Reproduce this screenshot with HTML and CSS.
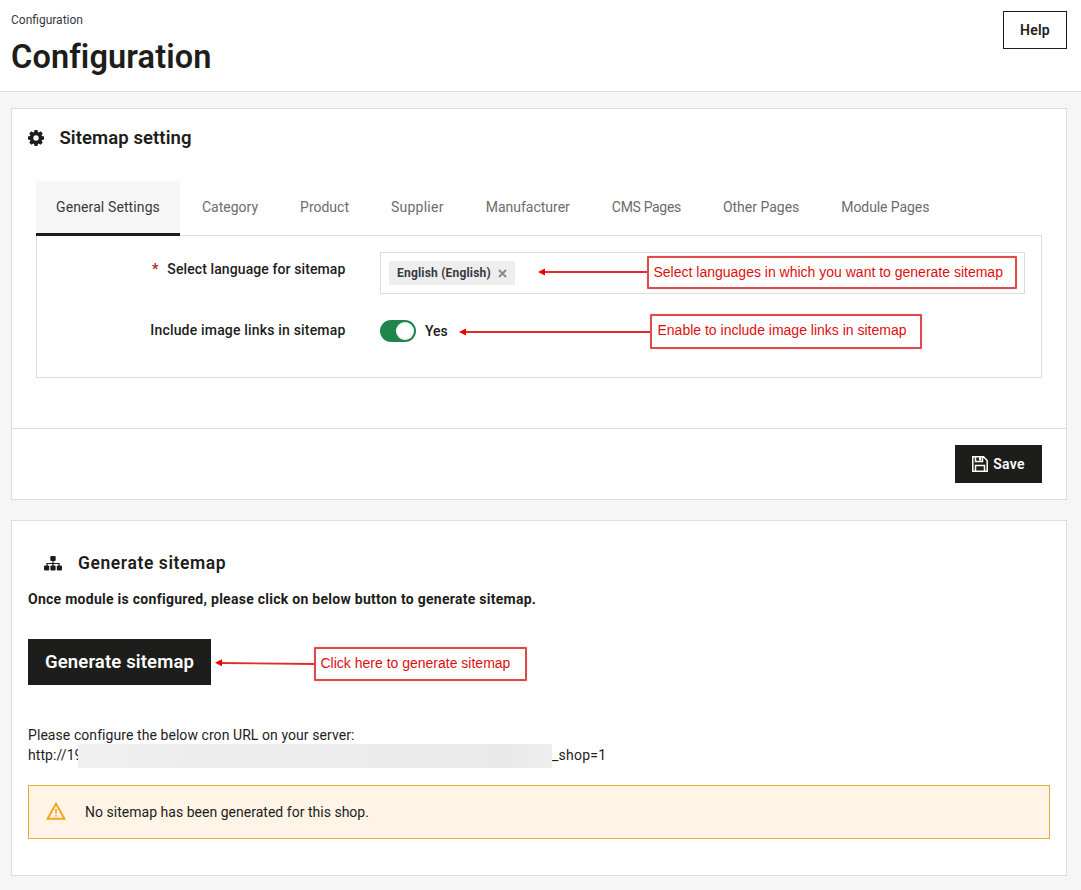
FILE: index.html
```
<!DOCTYPE html>
<html lang="en">
<head>
<meta charset="utf-8">
<title>Configuration</title>
<link rel="stylesheet" href="styles.css">
</head>
<body>
<header class="header">
  <div class="header-titles">
    <div class="breadcrumb">Configuration</div>
    <h1 class="page-title">Configuration</h1>
  </div>
  <button class="btn-help">Help</button>
</header>
<main class="main">
  <section class="card settings">
    <h2 class="card-title">
      <svg class="icon-gear" viewBox="0 0 16 16"><path fill-rule="evenodd" d="M6.500 0h3l.4 2.100.8.300L12.500 1.200l2.300 2.300-1.200 1.800.3.800 2.100.4v3l-2.100.4-.3.800 1.200 1.800-2.300 2.300-1.800-1.200-.8.300L9.500 16h-3l-.4-2.100-.8-.3-1.800 1.200-2.300-2.300 1.200-1.800-.3-.8L0 9.500v-3l2.100-.4.3-.8L1.200 3.500l2.300-2.300 1.800 1.200.8-.3zM8 5.300a2.700 2.700 0 1 0 0 5.400 2.700 2.700 0 0 0 0-5.400z"/></svg>
      <span>Sitemap setting</span>
    </h2>
    <div class="settings-body">
      <nav class="tabs">
        <a class="tab active">General Settings</a>
        <a class="tab">Category</a>
        <a class="tab">Product</a>
        <a class="tab tab-supplier">Supplier</a>
        <a class="tab">Manufacturer</a>
        <a class="tab tab-cms">CMS Pages</a>
        <a class="tab">Other Pages</a>
        <a class="tab tab-module">Module Pages</a>
      </nav>
      <div class="panel">
        <div class="row">
          <label class="label"><b class="required">*</b><span>Select language for sitemap</span></label>
          <div class="select">
            <div class="chip"><span>English (English)</span>
              <svg class="chip-x" viewBox="0 0 9 9"><path d="M1 1l7 7M8 1L1 8"/></svg>
            </div>
          </div>
        </div>
        <div class="row row-switch">
          <label class="label">Include image links in sitemap</label>
          <div class="switch"><i class="knob"></i></div>
          <span class="yes">Yes</span>
        </div>
      </div>
    </div>
    <footer class="card-footer">
      <button class="btn-save">
        <svg class="icon-save" viewBox="0 0 16 16"><path d="M.8.8h10.700l3.700 3.700v10.700H.8zM3.500.8v4.700h7V.8M3.500 15.200V9.500h9v5.700"/><path class="fill" d="M7 1h2.200v3.500H7z"/></svg>
        <span>Save</span>
      </button>
    </footer>
    <div class="note note-language">Select languages in which you want to generate sitemap</div>
    <div class="note note-images">Enable to include image links in sitemap</div>
    <svg class="arrow arrow-language" viewBox="0 0 109 10"><path class="line" d="M6 5h103"/><path class="head" d="M0 5l7-3.500v7z"/></svg>
    <svg class="arrow arrow-images" viewBox="0 0 191 10"><path class="line" d="M6 5h185"/><path class="head" d="M0 5l7-3.500v7z"/></svg>
  </section>
  <section class="card generate">
    <h2 class="generate-title">
      <svg class="icon-map" viewBox="0 0 18 15"><path d="M9 4v3.500M3 10V7.500h12V10M9 7.500V10"/><rect x="6.300" y="0" width="5.400" height="5" rx="1"/><rect x="0" y="9.500" width="5.200" height="5" rx="1"/><rect x="6.400" y="9.500" width="5.200" height="5" rx="1"/><rect x="12.800" y="9.500" width="5.200" height="5" rx="1"/></svg>
      <span>Generate sitemap</span>
    </h2>
    <p class="hint">Once module is configured, please click on below button to generate sitemap.</p>
    <button class="btn-generate">Generate sitemap</button>
    <div class="cron">
      <p>Please configure the below cron URL on your server:</p>
      <p class="url"><span class="url-start">http://19</span><i class="redacted"></i><span class="url-end">_shop=1</span></p>
    </div>
    <div class="alert">
      <svg class="icon-warn" viewBox="0 0 20 18"><path d="M10 1.800L18.400 16.800H1.600z"/><path class="thin" d="M10 7v4.500M10 13v1.700"/></svg>
      <span>No sitemap has been generated for this shop.</span>
    </div>
    <div class="note note-generate">Click here to generate sitemap</div>
    <svg class="arrow arrow-generate" viewBox="0 0 99 10"><path class="line" d="M6 5l93 1"/><path class="head" d="M0 4.700l7-3.500v7z"/></svg>
  </section>
</main>
</body>
</html>
```
FILE: styles.css
```
* { box-sizing: border-box; }
body { margin: 0; background: #f6f6f6; color: #1d1d1b; font: 14px/20px Roboto, "Noto Sans", sans-serif; }
h1, h2, p { margin: 0; }
button { font: inherit; font-weight: 600; padding: 0; border-radius: 0; }
svg { display: block; flex: none; }
.header { display: flex; justify-content: space-between; align-items: flex-start; height: 92px; padding: 11px 14px 0 11px; background: #fff; border-bottom: 1px solid #ddd; }
.breadcrumb { font-size: 12px; line-height: 18px; color: #363a41; }
.page-title { margin-top: 8px; font-size: 32.5px; line-height: 40px; font-weight: 600; letter-spacing: .13px; }
.btn-help { width: 64px; height: 38px; border: 1px solid #1d1d1b; background: #fff; color: #1d1d1b; letter-spacing: .25px; }
.main { display: flex; flex-direction: column; gap: 20px; padding: 16px 14px 14px 11px; }
.card { position: relative; background: #fff; border: 1px solid #ddd; }
.settings { height: 392px; display: flex; flex-direction: column; }
.card-title { display: flex; align-items: center; gap: 16px; height: 58px; padding-left: 15.5px; font-size: 18.5px; line-height: 24px; font-weight: 600; letter-spacing: .08px; }
.icon-gear { width: 16px; height: 16px; margin-top: -1px; fill: #1d1d1b; }
.settings-body { flex: 1; padding: 14px 24px 0; }
.tabs { display: flex; gap: 2px; }
.tab { height: 55px; padding: 16px 20px 0; color: #6c6c6c; white-space: nowrap; }
.tab.active { background: #f6f6f6; color: #363a41; border-bottom: 3px solid #1d1d1b; z-index: 1; letter-spacing: .11px; }
.tab-supplier { letter-spacing: .24px; }
.tab-cms { letter-spacing: -.33px; }
.tab-module { letter-spacing: -.09px; }
.panel { height: 143px; margin-top: -1px; padding: 16px; border: 1px solid #ddd; display: flex; flex-direction: column; gap: 26px; }
.row { display: flex; align-items: flex-start; font-weight: 500; }
.label { width: 292.5px; margin-right: 34.5px; padding-top: 7px; text-align: right; letter-spacing: .1px; }
.row-switch .label { padding-top: 0; letter-spacing: .18px; }
.required { margin-right: 9px; color: #b3271e; }
.select { flex: 1; height: 42px; padding: 8px; border: 1px solid #ddd; }
.chip { display: inline-flex; align-items: center; gap: 7px; height: 24px; padding: 0 8px; background: #eee; color: #363a41; font-size: 12px; font-weight: 700; letter-spacing: .2px; }
.chip-x { width: 9px; height: 9px; fill: none; stroke: #8a8a8a; stroke-width: 2; }
.switch { display: flex; justify-content: flex-end; width: 36px; height: 22px; padding: 2px; border-radius: 11px; background: #20844b; }
.knob { width: 18px; height: 18px; border-radius: 50%; background: #fff; }
.yes { margin-left: 9px; padding-top: 1px; }
.card-footer { display: flex; justify-content: flex-end; height: 71px; padding: 16px 24px 0; border-top: 1px solid #ddd; }
.btn-save { display: flex; align-items: center; justify-content: center; gap: 5px; width: 87px; height: 38px; border: 0; background: #1d1d1b; color: #fff; letter-spacing: .24px; }
.icon-save { width: 16px; height: 16px; margin-top: -1px; fill: none; stroke: #fff; stroke-width: 1.5; }
.icon-save .fill { fill: #fff; stroke: none; }
.generate { height: 356px; padding: 30px 16px 0; }
.generate-title { display: flex; align-items: center; gap: 16px; height: 24px; padding-left: 16px; font-size: 17.5px; font-weight: 600; letter-spacing: .58px; }
.icon-map { width: 18px; height: 15px; fill: #1d1d1b; }
.icon-map path { fill: none; stroke: #1d1d1b; stroke-width: 1.2; }
.hint { margin-top: 14px; font-weight: 700; letter-spacing: .271px; }
.btn-generate { display: block; width: 183px; height: 46px; margin-top: 30px; border: 0; background: #1d1d1b; color: #fff; font-size: 18.5px; letter-spacing: .14px; }
.cron { margin-top: 40px; letter-spacing: .07px; }
.url { display: flex; }
.url-start { width: 50px; white-space: nowrap; }
.url-end { letter-spacing: .24px; }
.redacted { position: relative; width: 474px; height: 24px; margin-top: -1px; background: linear-gradient(90deg, #efefef, #ececec 50%, #e9e9e9 90%, #eee); }
.alert { display: flex; align-items: center; gap: 19px; height: 54px; margin-top: 17px; padding-left: 17px; background: #fff4e6; border: 1px solid #e4a933; letter-spacing: .02px; }
.icon-warn { width: 20px; height: 18px; margin-top: -3px; fill: none; stroke: #f5a623; stroke-width: 2; }
.icon-warn .thin { stroke-width: 1.6; }
.note { position: absolute; padding-left: 4.5px; border: 2px solid #e04a4a; border-radius: 1px; background: #fff; color: #dc0f0f; font: 14px/29px "Liberation Sans", Arial, sans-serif; white-space: nowrap; box-shadow: 0 0 2px #f8d0d0; }
.note-language { left: 635px; top: 147px; width: 370px; height: 33px; }
.note-images { left: 638px; top: 205px; width: 272px; height: 35px; padding-left: 5.5px; }
.note-generate { left: 302px; top: 126px; width: 213px; height: 34px; }
.arrow { position: absolute; height: 10px; }
.arrow .line { fill: none; stroke: #e22c2c; stroke-width: 1.9; }
.arrow .head { fill: #e80000; }
.arrow-language { left: 526px; top: 158px; width: 109px; }
.arrow-images { left: 447px; top: 217.5px; width: 191px; }
.arrow-generate { left: 203px; top: 137px; width: 99px; }
```
